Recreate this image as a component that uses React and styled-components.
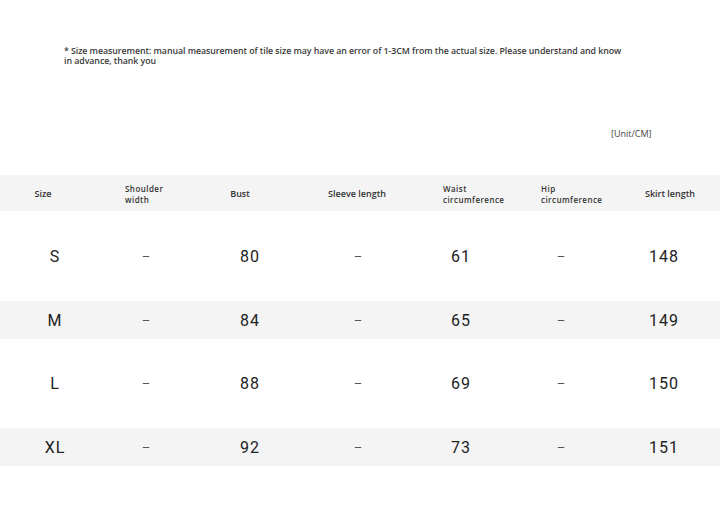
import React from "react";
import styled, { createGlobalStyle } from "styled-components";

const Global = createGlobalStyle`
  html, body { margin: 0; padding: 0; background: #fff; }
  body { font-family: "Open Sans", "Noto Sans", sans-serif; }
`;

const Page = styled.div`
  width: 720px;
  height: 510px;
  overflow: hidden;
  background: #fff;
  display: flex;
  flex-direction: column;
`;

const Note = styled.p`
  margin: 46px 0 0 64px;
  width: 561px;
  font-size: 8.8px;
  line-height: 10px;
  font-weight: 600;
  color: #3a3a3a;
  letter-spacing: -0.05px;
`;

const Unit = styled.div`
  margin: 63px 0 0 611px;
  font-size: 9px;
  line-height: 10px;
  color: #444;
`;

const Table = styled.div`
  margin-top: 22px;
  display: flex;
  flex-direction: column;
`;

const COLS = "110px 72px 136px 80px 126px 74px 132px";

const Row = styled.div`
  height: 63.5px;
  display: flex;
  align-items: center;
  overflow: hidden;
`;

const Band = styled.div`
  width: 100%;
  flex: none;
  height: ${(p) => p.$h}px;
  background: ${(p) => (p.$shade ? "#f4f4f4" : "transparent")};
  display: grid;
  grid-template-columns: ${COLS};
  align-items: center;
`;

const HeadCell = styled.div`
  display: flex;
  flex-direction: column;
  align-items: ${(p) => (p.$left ? "flex-start" : "center")};
  padding-left: ${(p) => (p.$left ? p.$dx : Math.max(0, 2 * p.$dx))}px;
  padding-right: ${(p) => (p.$left ? 0 : Math.max(0, -2 * p.$dx))}px;
  padding-top: 2px;
  color: #333;
  font-weight: 600;
  white-space: nowrap;
`;

const HeadLine = styled.span`
  display: block;
  font-size: ${(p) => (p.$tight ? "8px" : "9px")};
  letter-spacing: ${(p) => (p.$tight ? "0.45px" : "0")};
  line-height: ${(p) => (p.$tight ? "11px" : "12px")};
  height: ${(p) => (p.$tight ? "11px" : "12px")};
`;

const Cell = styled.div`
  text-align: center;
  padding-top: 1px;
  font-family: Roboto, "Liberation Sans", sans-serif;
  font-size: ${(p) => (p.$dash ? "13px" : "16px")};
  color: ${(p) => (p.$dash ? "#555" : "#222")};
  letter-spacing: ${(p) => (p.$dash ? "0" : "1px")};
  font-weight: 400;
`;

const headers = [
  { lines: ["Size"], dx: -12 },
  { lines: ["Shoulder", "width"], left: true, dx: 15 },
  { lines: ["Bust"], dx: -10 },
  { lines: ["Sleeve length"], dx: -1 },
  { lines: ["Waist", "circumference"], left: true, dx: 45 },
  { lines: ["Hip", "circumference"], left: true, dx: 17 },
  { lines: ["Skirt length"], dx: 6 },
];

const rows = [
  ["S", "–", "80", "–", "61", "–", "148"],
  ["M", "–", "84", "–", "65", "–", "149"],
  ["L", "–", "88", "–", "69", "–", "150"],
  ["XL", "–", "92", "–", "73", "–", "151"],
];

export default function App() {
  return (
    <Page>
      <Global />
      <Note>
        * Size measurement: manual measurement of tile size may have an error of 1-3CM from the actual size. Please understand and know in advance, thank you
      </Note>
      <Unit>[Unit/CM]</Unit>
      <Table>
        <Row>
          <Band $shade $h={36}>
            {headers.map((h, i) => (
              <HeadCell key={i} $left={h.left} $dx={h.dx}>
                {h.lines.map((l, li) => (
                  <HeadLine key={li} $tight={h.lines.length > 1}>
                    {l}
                  </HeadLine>
                ))}
              </HeadCell>
            ))}
          </Band>
        </Row>
        {rows.map((r, ri) => (
          <Row key={ri}>
            <Band $shade={ri % 2 === 1} $h={38}>
              {r.map((v, ci) => (
                <Cell key={ci} $dash={v === "–"}>
                  {v}
                </Cell>
              ))}
            </Band>
          </Row>
        ))}
      </Table>
    </Page>
  );
}
